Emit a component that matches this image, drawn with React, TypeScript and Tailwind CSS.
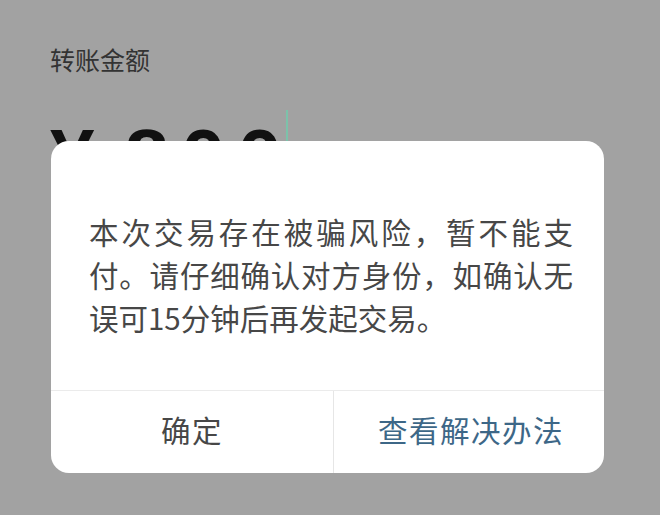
import React from 'react';

const cjk = "font-['Noto_Sans_CJK_SC','Noto_Sans',sans-serif]";

const App: React.FC = () => {
  return (
    <div className={`relative w-[660px] h-[515px] overflow-hidden bg-[#a2a2a2] ${cjk}`}>
      {/* Page behind the dialog */}
      <div className="pl-[50px] pt-[44px]">
        <div className="text-[25px] leading-[30px] text-[#333333]">转账金额</div>
        <div className="mt-[36px] flex items-start">
          <div className="mt-[8px] flex font-['Liberation_Sans',Arial,sans-serif] text-[80px] font-bold leading-none text-[#111111]">
            <span>¥</span>
            <span className="ml-[30px] tracking-[12px]">800</span>
          </div>
          <div className="-ml-[8px] h-[60px] w-[2px] bg-[#7cc2aa]" />
        </div>
      </div>

      {/* Risk warning dialog */}
      <div className="absolute left-[51px] top-[141px] flex h-[332px] w-[553px] flex-col overflow-hidden rounded-[18px] bg-white">
        <div className="flex-1 pl-[38px] pt-[69px] text-[29.5px] leading-[43px] text-[#474747]">
          <div className="w-[484px] text-justify [text-align-last:justify]">本次交易存在被骗风险，暂不能支</div>
          <div className="w-[484px] text-justify [text-align-last:justify]">付。请仔细确认对方身份，如确认无</div>
          <div className="whitespace-nowrap">误可15分钟后再发起交易。</div>
        </div>
        <div className="flex h-[83px] border-t border-[#ebebeb] pb-[6px] text-[29.5px] tracking-[1.5px]">
          <button className="flex w-[282px] items-center justify-center text-[#474747]">确定</button>
          <div className="-mb-[6px] w-px bg-[#e6e6e6]" />
          <button className="flex flex-1 items-center justify-center pl-[4px] text-[#3d6787]">查看解决办法</button>
        </div>
      </div>
    </div>
  );
};

export default App;
